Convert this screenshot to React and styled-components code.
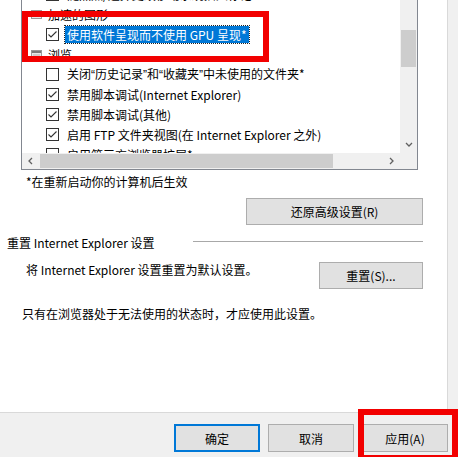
import React from "react";
import styled, { createGlobalStyle } from "styled-components";

const GlobalStyle = createGlobalStyle`
  html, body {
    margin: 0;
    padding: 0;
    background: #f0f0f0;
  }
  body {
    font-family: "Noto Sans CJK SC", "Noto Sans", sans-serif;
    font-size: 12px;
    color: #000;
  }
`;

const Dialog = styled.div`
  position: relative;
  width: 458px;
  height: 457px;
  overflow: hidden;
  background: #f0f0f0;
  display: flex;
  flex-direction: column;
`;

const TabPage = styled.div`
  width: 447px;
  height: 412px;
  background: #fff;
  border-right: 1px solid #d9d9d9;
  border-bottom: 1px solid #d9d9d9;
  display: flex;
  flex-direction: column;
`;

const ListBox = styled.div`
  margin: -10px 0 0 21px;
  width: 395px;
  height: 178px;
  border: 1px solid #828790;
  display: grid;
  grid-template-columns: 1fr 17px;
  grid-template-rows: 1fr 16px;
  background: #fff;
`;

const ListContent = styled.div`
  overflow: hidden;
`;

const Rows = styled.div`
  margin-top: -7px;
  display: flex;
  flex-direction: column;
`;

const Row = styled.div`
  height: 20px;
  display: flex;
  align-items: center;
  padding-left: ${(p) => (p.$header ? "9px" : "24px")};
  gap: ${(p) => (p.$header ? "4px" : "6px")};
  white-space: nowrap;
`;

const Box = styled.span`
  width: 11px;
  height: 11px;
  border: 1px solid #333;
  background: #fff;
  display: flex;
  align-items: center;
  justify-content: center;
  flex-shrink: 0;
`;

const Label = styled.span`
  line-height: 15px;
  padding: 1px 2px;
  color: ${(p) => (p.$selected ? "#fff" : "#000")};
  background: ${(p) => (p.$selected ? "#0078d7" : "transparent")};
  outline: ${(p) => (p.$selected ? "1px dotted #222" : "none")};
`;

const Quote = styled.span`
  font-family: "Liberation Sans", sans-serif;
`;

const VScroll = styled.div`
  background: #f0f0f0;
  display: flex;
  flex-direction: column;
`;

const VThumb = styled.div`
  margin: 39px 1px 0 1px;
  height: 37px;
  background: #cdcdcd;
`;

const HScroll = styled.div`
  background: #f0f0f0;
  display: flex;
  align-items: stretch;
`;

const HThumb = styled.div`
  margin: 1px 0 1px 1px;
  width: 293px;
  background: #cdcdcd;
`;

const ArrowBox = styled.div`
  width: ${(p) => p.$w || 17}px;
  height: ${(p) => p.$h || 16}px;
  display: flex;
  align-items: center;
  justify-content: center;
  flex-shrink: 0;
  margin-top: ${(p) => (p.$pushDown ? "auto" : "0")};
  margin-left: ${(p) => (p.$pushRight ? "auto" : "0")};
`;

const Corner = styled.div`
  background: #f0f0f0;
`;

const Note = styled.div`
  margin: 4px 0 0 26px;
  line-height: 16px;
`;

const ButtonRow = styled.div`
  display: flex;
  justify-content: flex-end;
  padding-right: 24px;
  margin-top: ${(p) => p.$top || 0}px;
`;

const Button = styled.button`
  width: ${(p) => p.$w}px;
  height: ${(p) => p.$h || 27}px;
  background: #e1e1e1;
  border: ${(p) => (p.$default ? "2px solid #0078d7" : "1px solid #adadad")};
  font-family: inherit;
  font-size: 12px;
  color: #000;
  padding: 0;
  display: flex;
  align-items: center;
  justify-content: center;
`;

const GroupHeader = styled.div`
  display: flex;
  align-items: center;
  margin-top: 10px;
  padding: 0 24px 0 7px;
  height: 16px;
`;

const GroupTitle = styled.span`
  line-height: 16px;
  white-space: nowrap;
`;

const GroupLine = styled.div`
  margin: 0 0 3px auto;
  width: 230px;
  height: 1px;
  background: #a8a8a8;
`;

const ResetRow = styled.div`
  display: flex;
  justify-content: space-between;
  align-items: flex-start;
  margin-top: 11px;
  padding: 0 24px 0 26px;
`;

const Text = styled.span`
  line-height: 16px;
  white-space: nowrap;
`;

const Warning = styled.div`
  margin: 17px 0 0 22px;
  line-height: 16px;
`;

const ButtonBar = styled.div`
  flex: 1;
  display: flex;
  justify-content: flex-end;
  gap: 8px;
  padding: 11px 10px 0 0;
`;

// red annotation frames drawn over the dialog
const Highlight = styled.div`
  position: absolute;
  left: ${(p) => p.$x}px;
  top: ${(p) => p.$y}px;
  width: ${(p) => p.$w}px;
  height: ${(p) => p.$h}px;
  border: 6px solid #f20000;
  box-sizing: border-box;
  pointer-events: none;
`;

function Check({ checked }) {
  return (
    <Box>
      {checked && (
        <svg width="11" height="11" viewBox="0 0 11 11">
          <polyline points="1.5,5.5 4,8 9.5,2.5" fill="none" stroke="#333" strokeWidth="1.1" />
        </svg>
      )}
    </Box>
  );
}

function CategoryIcon() {
  return (
    <svg width="11" height="9" viewBox="0 0 11 9">
      <rect x="0.5" y="0.5" width="10" height="8" fill="#e8e8e8" stroke="#9a9a9a" />
      <rect x="1" y="1" width="9" height="2" fill="#7a7a7a" />
      <line x1="2" y1="5" x2="9" y2="5" stroke="#b5b5b5" />
    </svg>
  );
}

function Chevron({ dir }) {
  const pts = {
    down: "1,1 4,4 7,1",
    left: "4,1 1,4 4,7",
    right: "1,1 4,4 1,7",
  }[dir];
  const vertical = dir === "down";
  return (
    <svg width={vertical ? 8 : 5} height={vertical ? 5 : 8} viewBox={vertical ? "0 0 8 5" : "0 0 5 8"}>
      <polyline points={pts} fill="none" stroke="#606060" strokeWidth="1.3" />
    </svg>
  );
}

// narrow quotes, the way the system UI font draws them
function withQuotes(text) {
  return text.split(/([“”])/).map((part, i) =>
    part === "“" || part === "”" ? <Quote key={i}>{part}</Quote> : part
  );
}

const items = [
  { type: "check", checked: false, text: "随焦点/选择更改移动系统插入标记" },
  { type: "header", text: "加速的图形" },
  { type: "check", checked: true, text: "使用软件呈现而不使用 GPU 呈现*", selected: true },
  { type: "header", text: "浏览" },
  { type: "check", checked: false, text: "关闭“历史记录”和“收藏夹”中未使用的文件夹*" },
  { type: "check", checked: true, text: "禁用脚本调试(Internet Explorer)" },
  { type: "check", checked: true, text: "禁用脚本调试(其他)" },
  { type: "check", checked: true, text: "启用 FTP 文件夹视图(在 Internet Explorer 之外)" },
  { type: "check", checked: false, text: "启用第三方浏览器扩展*" },
];

export default function App() {
  return (
    <>
      <GlobalStyle />
      <Dialog>
        <TabPage>
          <ListBox>
            <ListContent>
              <Rows>
                {items.map((it, i) =>
                  it.type === "header" ? (
                    <Row key={i} $header>
                      <CategoryIcon />
                      <Label>{it.text}</Label>
                    </Row>
                  ) : (
                    <Row key={i}>
                      <Check checked={it.checked} />
                      <Label $selected={it.selected}>{withQuotes(it.text)}</Label>
                    </Row>
                  )
                )}
              </Rows>
            </ListContent>
            <VScroll>
              <VThumb />
              <ArrowBox $pushDown $w={17} $h={17}>
                <Chevron dir="down" />
              </ArrowBox>
            </VScroll>
            <HScroll>
              <ArrowBox $w={17}>
                <Chevron dir="left" />
              </ArrowBox>
              <HThumb />
              <ArrowBox $pushRight $w={17}>
                <Chevron dir="right" />
              </ArrowBox>
            </HScroll>
            <Corner />
          </ListBox>

          <Note>*在重新启动你的计算机后生效</Note>

          <ButtonRow $top={8}>
            <Button $w={177}>还原高级设置(R)</Button>
          </ButtonRow>

          <GroupHeader>
            <GroupTitle>重置 Internet Explorer 设置</GroupTitle>
            <GroupLine />
          </GroupHeader>

          <ResetRow>
            <Text>将 Internet Explorer 设置重置为默认设置。</Text>
            <Button $w={104}>重置(S)...</Button>
          </ResetRow>

          <Warning>只有在浏览器处于无法使用的状态时，才应使用此设置。</Warning>
        </TabPage>

        <ButtonBar>
          <Button $w={86} $h={28} $default>确定</Button>
          <Button $w={86} $h={28}>取消</Button>
          <Button $w={86} $h={28}>应用(A)</Button>
        </ButtonBar>

        <Highlight $x={22} $y={11} $w={247} $h={51} />
        <Highlight $x={358} $y={409} $w={100} $h={52} />
      </Dialog>
    </>
  );
}
